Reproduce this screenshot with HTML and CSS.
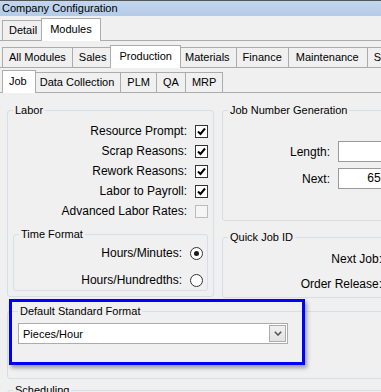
FILE: index.html
```html
<!DOCTYPE html>
<html lang="en">

<head>
  <meta charset="UTF-8">
  <meta name="viewport" content="width=device-width, initial-scale=1.0">
  <title>Company Configuration</title>
  <link rel="stylesheet" href="styles.css">
</head>

<body>
  <div class="window">
    <div class="titlebar">Company Configuration</div>

    <div class="tabstrip">
      <div class="tab">Detail</div>
      <div class="tab active">Modules</div>
    </div>
    <div class="page page-modules">
      <div class="tabstrip">
        <div class="tab">All Modules</div>
        <div class="tab">Sales</div>
        <div class="tab active">Production</div>
        <div class="tab">Materials</div>
        <div class="tab">Finance</div>
        <div class="tab wide">Maintenance</div>
        <div class="tab">Shipping</div>
      </div>
      <div class="page">
        <div class="tabstrip">
          <div class="tab active">Job</div>
          <div class="tab">Data Collection</div>
          <div class="tab">PLM</div>
          <div class="tab">QA</div>
          <div class="tab">MRP</div>
        </div>
        <div class="page page-job">
          <div class="columns">
            <div class="col">
              <fieldset class="group labor">
                <legend>Labor</legend>
                <div class="opt">
                  <span>Resource Prompt:</span>
                  <span class="check"><svg width="11" height="11" viewBox="0 0 11 11"><polyline points="2,5.5 4.5,8 9,2.5" /></svg></span>
                </div>
                <div class="opt">
                  <span>Scrap Reasons:</span>
                  <span class="check"><svg width="11" height="11" viewBox="0 0 11 11"><polyline points="2,5.5 4.5,8 9,2.5" /></svg></span>
                </div>
                <div class="opt">
                  <span>Rework Reasons:</span>
                  <span class="check"><svg width="11" height="11" viewBox="0 0 11 11"><polyline points="2,5.5 4.5,8 9,2.5" /></svg></span>
                </div>
                <div class="opt">
                  <span>Labor to Payroll:</span>
                  <span class="check"><svg width="11" height="11" viewBox="0 0 11 11"><polyline points="2,5.5 4.5,8 9,2.5" /></svg></span>
                </div>
                <div class="opt">
                  <span>Advanced Labor Rates:</span>
                  <span class="check disabled"></span>
                </div>

                <fieldset class="group time">
                  <legend>Time Format</legend>
                  <div class="opt">
                    <span>Hours/Minutes:</span>
                    <span class="radio on"></span>
                  </div>
                  <div class="opt">
                    <span>Hours/Hundredths:</span>
                    <span class="radio"></span>
                  </div>
                </fieldset>
              </fieldset>
            </div>

            <div class="col">
              <fieldset class="group jobnum">
                <legend>Job Number Generation</legend>
                <div class="field">
                  <span class="lbl">Length:</span>
                  <span class="textbox"></span>
                </div>
                <div class="field">
                  <span class="lbl">Next:</span>
                  <span class="textbox">6500</span>
                </div>
              </fieldset>

              <fieldset class="group quick">
                <legend>Quick Job ID</legend>
                <div class="field">
                  <span class="lbl">Next Job:</span>
                </div>
                <div class="field">
                  <span class="lbl">Order Release:</span>
                </div>
              </fieldset>
            </div>
          </div>

          <fieldset class="group std">
            <legend>Default Standard Format</legend>
            <div class="combo">
              <span>Pieces/Hour</span>
              <span class="combo-btn"><svg width="8" height="5" viewBox="0 0 8 5"><polyline points="0.8,0.8 4,4 7.2,0.8" /></svg></span>
            </div>
          </fieldset>

          <fieldset class="group sched">
            <legend>Scheduling</legend>
          </fieldset>
        </div>
      </div>
    </div>

    <!-- annotation box drawn over the screenshot -->
    <div class="highlight"></div>
  </div>
</body>

</html>
```

FILE: styles.css
```css
html,
body {
  margin: 0;
  width: 381px;
  height: 392px;
  overflow: hidden;
  background-color: #f0f0f0;
}

body {
  font-family: "Liberation Sans", Arial, sans-serif;
  font-size: 12px;
  color: #000;
}

.window {
  position: relative;
  height: 392px;
}

.titlebar {
  height: 15px;
  line-height: 15px;
  padding-left: 2px;
  border-top: 1px solid #555;
  background: linear-gradient(#c3d7ee, #b3cbe8);
  font-size: 11px;
  white-space: nowrap;
}

/* tabs */
.tabstrip {
  display: flex;
  align-items: flex-end;
  height: 24px;
  padding-left: 3px;
  white-space: nowrap;
}

.tab {
  flex: none;
  box-sizing: border-box;
  height: 20px;
  line-height: 19px;
  margin-left: -1px;
  padding: 0 6px;
  border: 1px solid #acacac;
  border-bottom: none;
  background-color: #f0f0f0;
  font-size: 11px;
}

.tab.wide {
  padding: 0 8px 0 7px;
}

.tab.active {
  position: relative;
  z-index: 1;
  height: 23px;
  line-height: 20px;
  margin: 0 -2px -1px -3px;
  padding: 0 8px;
  background-color: #fff;
}

.tab.active:first-child {
  margin-left: -1px;
  padding-left: 6px;
}

.page {
  border-top: 1px solid #acacac;
}

.page-modules {
  padding-top: 2px;
}

.page-job {
  padding: 11px 0 0 7px;
}

/* group boxes */
.group {
  margin: 0;
  padding: 0 5px;
  min-width: 0;
  border: 1px solid #d5dfe5;
  border-radius: 3px;
}

.group legend {
  padding: 0 2px;
  font-size: 11px;
  line-height: 13px;
}

.columns {
  display: grid;
  grid-template-columns: 207px 230px;
  column-gap: 8px;
  align-items: start;
}

.labor {
  padding: 4px 5px 5px;
}

.opt {
  display: flex;
  justify-content: flex-end;
  align-items: center;
  gap: 8px;
  height: 20px;
  white-space: nowrap;
}

.time {
  margin-top: 7px;
  padding: 2px 4px 0 5px;
}

.time .opt + .opt {
  margin-top: 7px;
}

.check {
  display: grid;
  place-items: center;
  box-sizing: border-box;
  width: 13px;
  height: 13px;
  border: 1px solid #333;
  background-color: #fff;
}

.check polyline {
  fill: none;
  stroke: #000;
  stroke-width: 2;
}

.check.disabled {
  border-color: #bcbcbc;
  background-color: #f5f5f5;
}

.radio {
  display: grid;
  place-items: center;
  box-sizing: border-box;
  width: 13px;
  height: 13px;
  border: 1px solid #333;
  border-radius: 50%;
  background-color: #fff;
}

.radio.on::after {
  content: "";
  width: 5px;
  height: 5px;
  border-radius: 50%;
  background-color: #1a1a1a;
}

.field {
  display: flex;
  align-items: center;
  gap: 8px;
  height: 21px;
  white-space: nowrap;
}

.field .lbl {
  text-align: right;
}

.jobnum {
  padding: 24px 5px 31px;
}

.jobnum .field + .field {
  margin-top: 6px;
}

.jobnum .lbl {
  width: 102px;
}

.textbox {
  box-sizing: border-box;
  width: 60px;
  height: 21px;
  line-height: 19px;
  padding-right: 3px;
  border: 1px solid #9a9a9a;
  background-color: #fff;
  text-align: right;
}

.quick {
  margin-top: 10px;
  padding: 5px 5px 3px;
}

.quick .field {
  height: 20px;
}

.quick .field + .field {
  margin-top: 5px;
}

.quick .lbl {
  width: 154px;
  flex: none;
}

.std {
  margin: 7px -40px 0 0;
  padding: 5px 10px 34px;
}

.combo {
  display: flex;
  align-items: center;
  box-sizing: border-box;
  width: 270px;
  height: 21px;
  padding-left: 4px;
  border: 1px solid #acacac;
  background-color: #fff;
  font-size: 11px;
}

.combo-btn {
  display: grid;
  place-items: center;
  box-sizing: border-box;
  width: 17px;
  height: 17px;
  margin: 0 1px 0 auto;
  border: 1px solid #acacac;
  background: linear-gradient(#f0f0f0, #e2e2e2);
}

.combo-btn polyline {
  fill: none;
  stroke: #555;
  stroke-width: 1.6;
}

.sched {
  margin: 5px -40px 0 0;
  height: 40px;
}

.highlight {
  position: absolute;
  left: 9px;
  top: 299px;
  box-sizing: border-box;
  width: 296px;
  height: 66px;
  border: 3px solid #0000ff;
  box-shadow: 2px 3px 4px rgba(0, 0, 0, 0.35);
}
```
